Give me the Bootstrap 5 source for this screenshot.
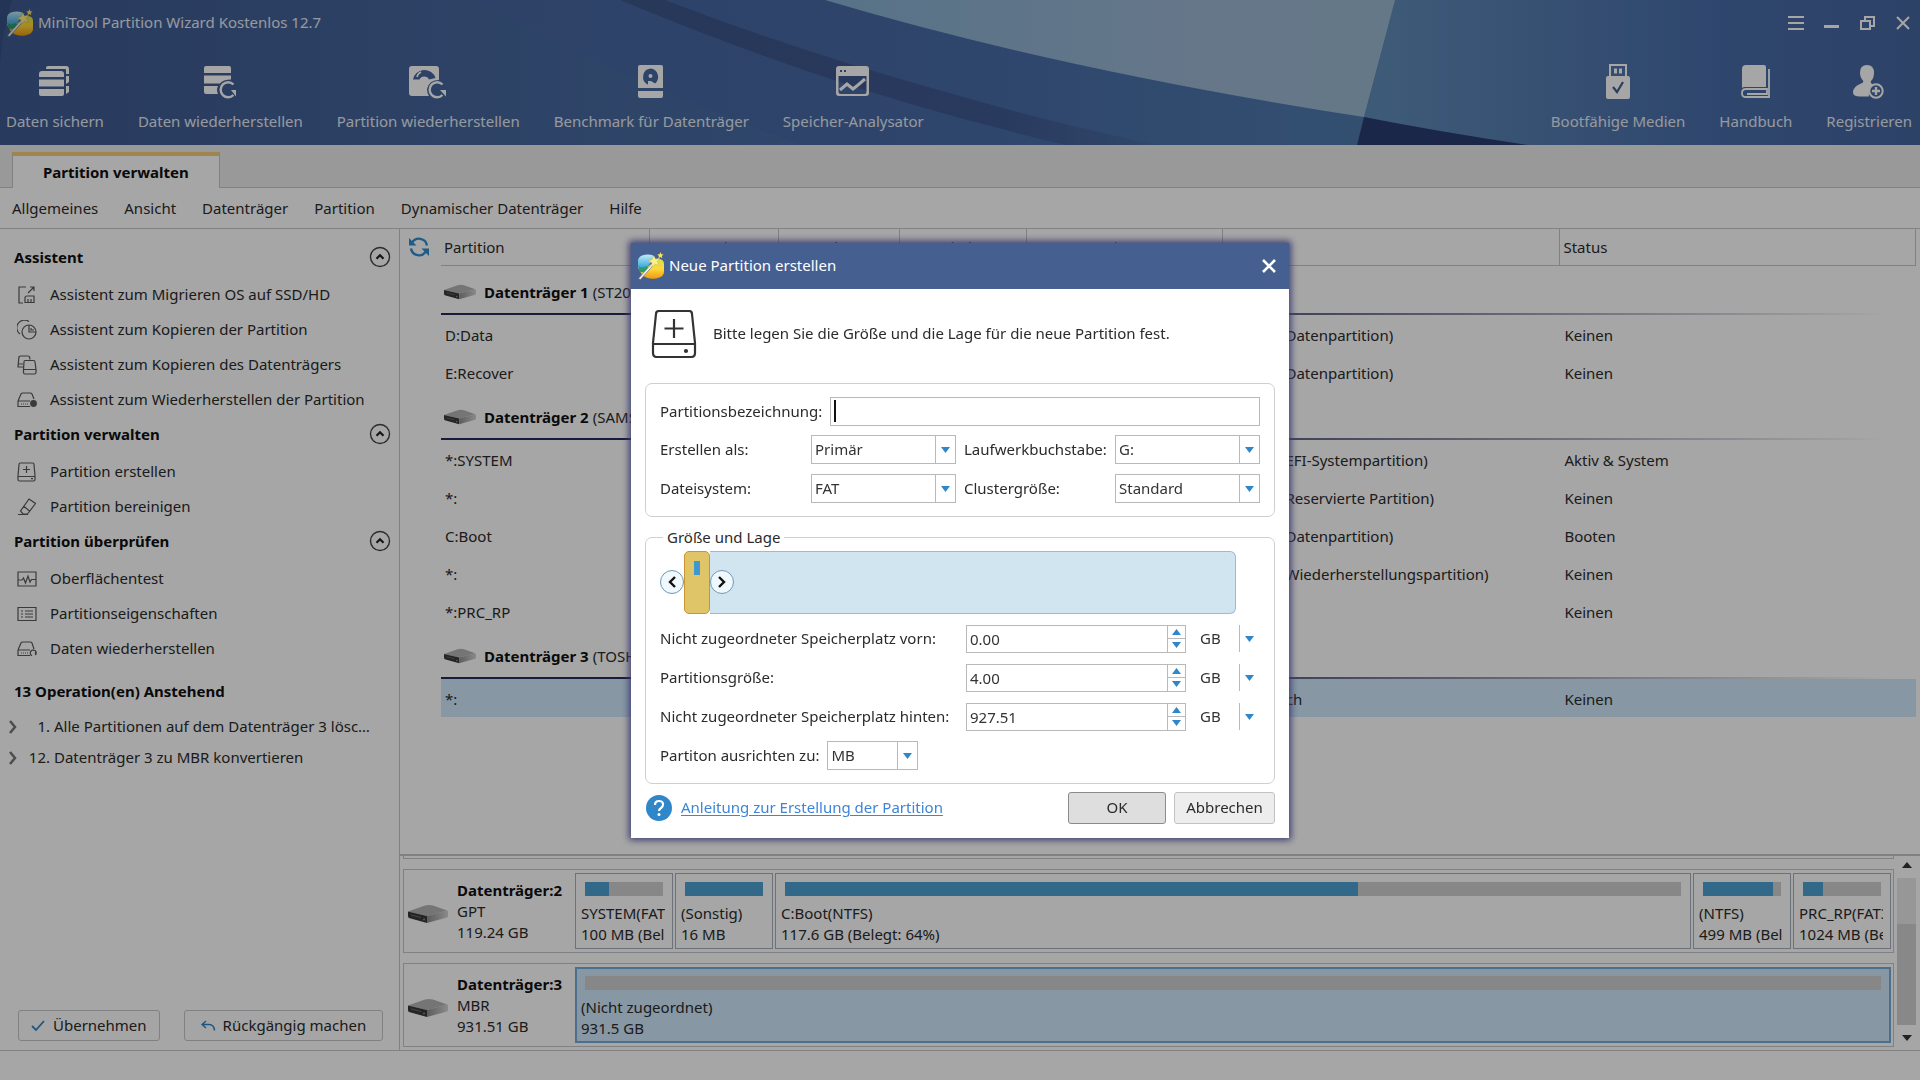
<!DOCTYPE html>
<html lang="de">
<head>
<meta charset="utf-8">
<meta name="viewport" content="width=device-width, initial-scale=1">
<title>MiniTool Partition Wizard Kostenlos 12.7</title>
<link href="https://cdn.jsdelivr.net/npm/bootstrap@5.3.0/dist/css/bootstrap.min.css" rel="stylesheet">
<style>
  :root { --line:#c4c6ca; --ink:#2b2b2b; --ink-strong:#101010; --accent:#2f86c9; --brand:#455f91; --used:#4da0d1; --pick:#cfe9fc; }
  body { font-family:"Noto Sans","Open Sans",sans-serif; font-size:15px; line-height:21px; color:var(--ink); background:#fff; overflow:hidden; }
  button, input, select { font:inherit; color:inherit; }
  b, .strong-text { font-weight:700; color:var(--ink-strong); }
  a { color:inherit; text-decoration:none; }
  svg { flex:none; display:block; }

  /* header */
  .app-head { background:var(--brand); color:#e6ebf4; height:145px; position:relative; overflow:hidden; }
  .head-art { position:absolute; inset:0; width:100%; height:100%; }
  .head-body { position:relative; }
  .title-row { height:45px; padding:0 8px 0 6px; }
  .win-set { gap:20px; }
  .win-btn { border:0; background:none; padding:0; width:16px; height:16px; color:#fff; }
  .tool-row { padding:19px 8px 0 6px; }
  .tool-set { gap:34px; }
  .tool { border:0; background:none; padding:0; gap:11px; color:inherit; }
  .tool svg { color:#fff; }

  /* tabs and menu */
  .tab-strip { height:43px; background:#ebebeb; border-bottom:1px solid var(--line); padding:7px 12px 0; }
  .tab-on { border:1px solid var(--line); border-top:4px solid #f7cd7d; border-bottom:0; background:#fff; padding:0 30px; margin-bottom:-1px; }
  .menu-row { height:41px; border-bottom:1px solid var(--line); padding:0 12px; gap:26px; }

  /* sidebar */
  .side { width:400px; border-right:1px solid var(--line); padding:11px 8px 9px 14px; }
  .side-head { height:37px; padding-bottom:3px; }
  .fold { border:0; background:none; padding:0; }
  .side-item { height:35px; gap:13px; padding-left:3px; }
  .side-item svg { color:#5a5a5a; }
  .task { height:31px; gap:10px; margin:0 12px 0 -5px; }
  .task-no { width:23px; text-align:right; }
  .task-body { gap:4px; min-width:0; }
  .side-actions { gap:24px; padding-left:4px; }
  .side-btn { height:31px; border:1px solid var(--line); border-radius:3px; background:#fdfdfd; gap:7px; padding:0 12px; }

  /* partition table */
  .grid-area { padding-left:41px; position:relative; }
  .reload { position:absolute; left:8px; top:7px; border:0; background:none; padding:0; }
  .parts { width:100%; table-layout:fixed; border-collapse:separate; border-spacing:0; }
  .parts th { height:37px; font-weight:400; border-bottom:1px solid var(--line); border-right:1px solid var(--line); padding:0 3px; text-align:center; }
  .parts th.to-left { text-align:left; }
  .parts .disk-row td { height:49px; padding:5px 3px 0; white-space:nowrap; border-bottom:2px solid; border-image:linear-gradient(90deg,#262a5c 0 35%,#6b6e90 60%,#fff 98%) 1; }
  .parts .part-row td { height:38px; padding:2px 4px 0; white-space:nowrap; }
  .parts .part-row.picked td { background:var(--pick); }
  .kind-box { width:14px; height:14px; background:#8ac4e8; border:1px solid #5a97c0; }

  /* disk map */
  .map { border-top:2px solid var(--line); height:196px; padding:0 0 3px 3px; }
  .disk-sliver { height:3px; border:1px solid var(--line); border-top:0; }
  .disk-card { height:84px; border:1px solid var(--line); padding:3px 2px 3px 3px; margin-top:10px; }
  .disk-info { width:168px; gap:8px; }
  .disk-info svg { margin-top:6px; }
  .vol-row { gap:2px; }
  .vol { border:1px solid #a7afbd; padding:8px 9px 4px; overflow:hidden; white-space:nowrap; }
  .vol-sm { width:98px; }
  .vol.picked { background:var(--pick); border:2px solid #75abda; padding:7px 8px 3px; }
  .vol-bar { height:14px; background:#d0d0d0; margin-bottom:7px; }
  .vol-fill { height:100%; background:var(--used); }
  .vol-text { margin:0 -2px 0 -4px; overflow:hidden; }
  .scroller { width:19px; margin:0 4px 0 3px; }
  .scroller button { border:0; background:none; padding:0; height:18px; }
  .scroll-track { background:#e8e8e8; height:150px; padding-top:46px; margin:4px 0; }
  .scroll-thumb { background:#d2d2d2; height:100%; }
  .foot { height:30px; border-top:1px solid var(--line); }

  /* dialog */
  .veil { position:fixed; inset:0; background:rgba(0,0,0,.35); }
  .stage { position:fixed; inset:0; }
  .dlg { width:658px; background:#fff; box-shadow:0 0 7px 2px #3c3c70; }
  .dlg-title { height:46px; background:var(--brand); color:#fff; padding:0 8px 0 6px; }
  .dlg-lead { padding:21px 20px 25px; gap:16px; }
  .dlg-body { padding:0 14px; }
  .panel { border:1px solid #cfcfcf; border-radius:7px; padding:13px 14px; }
  .panel-lower { margin-top:20px; position:relative; }
  .panel-name { position:absolute; left:17px; top:-11px; background:#fff; padding:0 4px; }
  .field { height:29px; border:1px solid #b9b9b9; border-radius:0; background-color:#fff; padding:0 3px; min-width:0; color:#333; }
  .field:focus { outline:0; }
  .field-active { caret-color:transparent; background-image:linear-gradient(#111,#111); background-repeat:no-repeat; background-size:2px 22px; background-position:3px center; }
  .pick { appearance:none; background-image:url("data:image/svg+xml,%3Csvg xmlns='http://www.w3.org/2000/svg' width='20' height='27'%3E%3Cpath d='M.5 0v27' stroke='%23b9b9b9'/%3E%3Cpath d='M6 11h9l-4.5 6z' fill='%232f86c9'/%3E%3C/svg%3E"); background-repeat:no-repeat; background-position:right center; }
  .pick-bare { border-color:transparent; margin-left:10px; }
  .pick-align { width:91px; }
  .form-grid { display:grid; grid-template-columns:151px 145px 159px 1fr; row-gap:10px; margin-top:9px; }
  .form-grid .pair-label { padding-left:8px; }
  .size-grid { display:grid; grid-template-columns:306px 220px 1fr; row-gap:11px; }
  .size-grid .field { height:28px; }
  .spin-keys { width:21px; border:1px solid #b9b9b9; border-left:0; }
  .spin-keys button { border:0; background:#fff; padding:0; flex:1; }
  .spin-keys button + button { border-top:1px solid #b9b9b9; }
  .lay { height:63px; margin:0 0 11px; }
  .lay-used { width:26px; background:#dfc468; border:1px solid #c9952f; border-radius:5px; padding-top:9px; }
  .lay-mark { width:6px; height:14px; background:#3d98cf; }
  .lay-free { flex:1; background:#d1e5f1; border:1px solid #a3b5da; border-left:0; border-radius:0 6px 6px 0; margin-right:24px; }
  .lay-key { width:24px; height:24px; border:1px solid #6f97b3; border-radius:50%; background:#eef8fd; padding:0; color:#111; z-index:1; }
  .lay-key.after { margin-right:-24px; }
  .align-row { padding-top:10px; }
  .dlg-foot { padding:8px 0 14px; }
  .dlg-btn { height:32px; border:1px solid #c2c2c2; border-radius:3px; background:#ededed; padding:0; width:101px; }
  .dlg-btn.main { border-color:#8b8b8b; background:#dedede; width:98px; }
  .help-link { color:#3d85d8; text-decoration:underline; text-underline-offset:2px; }
</style>
<script src="https://cdn.jsdelivr.net/npm/bootstrap@5.3.0/dist/js/bootstrap.bundle.min.js"></script>
</head>
<body class="d-flex flex-column vh-100">

<svg width="0" height="0" class="position-absolute" aria-hidden="true">
  <defs>
    <linearGradient id="gYel" x1="0" y1="0" x2="0" y2="1"><stop offset="0" stop-color="#d9e04a"/><stop offset=".5" stop-color="#ffd83a"/><stop offset="1" stop-color="#ec9a10"/></linearGradient>
    <linearGradient id="gCy" x1="0" y1="0" x2="0" y2="1"><stop offset="0" stop-color="#bfeaf8"/><stop offset="1" stop-color="#1c9ad6"/></linearGradient>
    <linearGradient id="gDisk" x1="0" y1="0" x2="1" y2="0"><stop offset="0" stop-color="#8f8f8f"/><stop offset="1" stop-color="#d4d4d4"/></linearGradient>
    <symbol id="logo" viewBox="0 0 28 28">
      <path d="M1 9q0-4 4-5.500Q10 2 15 3l3 2-7 9-8 4q-2-1-2-3z" fill="url(#gCy)"/>
      <path d="M1 15q5 3 9 0L21 7q6 0 6 5v8q0 5-8 6.500-9 1-14-3.500z" fill="url(#gYel)"/>
      <path d="M1.500 14q4 3 8 0l2 2q-4 6-9 3.500z" fill="#2f9a6a"/>
      <path d="M1.500 26.500L16 10l1.800 1.600L3.500 27.500z" fill="#eef0f2" stroke="#6d7a80" stroke-width=".7"/>
      <path d="M16.500 3.500l2.200 3.600 4-1-2.500 3.600 2.300 3.800-4.300-1.200-3 3-.2-4.400-3.800-2 4-1.400z" fill="#ffef8c" stroke="#b9a93a" stroke-width=".4"/>
      <path d="M23.500 0l.8 2.200 2.300.2-1.800 1.500.5 2.300-1.900-1.200-2 1.200.6-2.300L20.200 2.400l2.400-.2z" fill="#ffe45a"/>
    </symbol>
    <symbol id="disk" viewBox="0 0 40 20">
      <path d="M0 7.500L17 1.500q4-1 8 0L39 6.500 19 12z" fill="#b4b4b4"/>
      <path d="M0 7.500L19 12v7L1 14q-1-.5-1-2z" fill="#3a3a3a"/>
      <path d="M19 12L39 6.500q1 0 1 1V12q0 1-1 1.500L19 19z" fill="url(#gDisk)"/>
      <path d="M3 11l10 2.500" stroke="#6a6a6a" stroke-width="1"/><circle cx="16" cy="15.500" r=".9" fill="#5ec06a"/>
    </symbol>
    <symbol id="i-fold" viewBox="0 0 22 22"><circle cx="11" cy="11" r="9.500" fill="none" stroke="#444" stroke-width="1.400"/><path d="M7.500 12.700L11 9.200l3.500 3.500" fill="none" stroke="#222" stroke-width="2.200"/></symbol>
    <symbol id="i-save" viewBox="0 0 34 36" fill="currentColor"><path d="M8 4q0-2 2-2h18q3 0 3 3v5h-3V6q0-1-1-1H8zM28 12h3v6l-3 2zM28 22h3v6l-3 2z"/><path d="M1 13V10q0-3 3-3h19q3 0 3 3v3zM1 15.500h25v7H1zM1 25h25v5q0 2-2 2H3q-2 0-2-2z"/></symbol>
    <symbol id="i-rest" viewBox="0 0 34 36" fill="currentColor"><path d="M1 9V4q0-2 2-2h23q2 0 2 2v5zM1 11.500h27v4q-8 0-11 4H1zM1 22h14q-2 4 0 8H3q-2 0-2-2z"/><path d="M30.500 20.500a7.500 7.500 0 1 0 0 10.500" fill="none" stroke="currentColor" stroke-width="2.400"/><path d="M28 26h5v6.500z"/></symbol>
    <symbol id="i-prest" viewBox="0 0 38 36"><path fill="currentColor" fill-rule="evenodd" d="M3 2h24q3 0 3 3v11q-10 0-12 9 0 4 2 7H3q-3 0-3-3V5q0-3 3-3zM4 15.500a11.500 11 0 0 1 22.500-1.500L20 15.500a5 4.500 0 0 0-9.500 0z"/><circle cx="15.300" cy="15.500" r="1.600" fill="currentColor"/><path d="M8 13a8 7 0 0 1 4-5" fill="none" stroke="currentColor" stroke-width="1.600"/><path d="M33.500 20.500a7.500 7.500 0 1 0 0 10.500" fill="none" stroke="currentColor" stroke-width="2.400"/><path d="M31 26h6v6.500z" fill="currentColor"/></symbol>
    <symbol id="i-bench" viewBox="0 0 28 36"><path fill="currentColor" fill-rule="evenodd" d="M3 1h21q2 0 2 2v21H1V3q0-2 2-2zM13.500 4.500a8 8.500 0 0 0-2.500 16.300V17h3l4 2.500A8.500 8.500 0 0 0 13.500 4.500z"/><circle cx="13.500" cy="12" r="2" fill="currentColor"/><path fill="currentColor" d="M1 27h25v5q0 2-2 2H3q-2 0-2-2z"/></symbol>
    <symbol id="i-space" viewBox="0 0 34 36"><path fill="currentColor" fill-rule="evenodd" d="M3 2h27q3 0 3 3v24q0 3-3 3H3q-3 0-3-3V5q0-3 3-3zM2.500 12v16q0 2 2 2h24q2 0 2-2V12z"/><path d="M4 7h2M8 7h2" stroke="#455f91" stroke-width="2"/><path d="M4 26l7-6 6 5 5-4 7-6" fill="none" stroke="currentColor" stroke-width="3"/></symbol>
    <symbol id="i-usb" viewBox="0 0 24 36"><path fill="currentColor" fill-rule="evenodd" d="M3 0h18v12h1q2 0 2 2v19q0 2-2 2H2q-2 0-2-2V14q0-2 2-2h1zM5 2v10h14V2z"/><path d="M8 4.500h3v5H8zM13 4.500h3v5h-3z" fill="currentColor"/><path d="M7 23l4 5 6-10" fill="none" stroke="#455f91" stroke-width="2.200"/></symbol>
    <symbol id="i-book" viewBox="0 0 30 36"><path fill="currentColor" fill-rule="evenodd" d="M5 1h18q2 0 2 2v20H4q-2 0-3 1V5q0-4 4-4z"/><path d="M28 5v28H4q-3 0-3-4 0-4 4-4h21v5H6" fill="none" stroke="currentColor" stroke-width="1.800"/></symbol>
    <symbol id="i-reg" viewBox="0 0 32 36"><path fill="currentColor" d="M14 1q7 0 7 8 0 5-3 8-1 2 2 3.500-5 4-4 12H7q-7 0-7-4 0-6 8-9 3-1 2-3-3-3-3-8 0-7.500 7-7.500z"/><circle cx="23" cy="27" r="6.700" fill="none" stroke="currentColor" stroke-width="2"/><path d="M19 27h8M23 23v8" stroke="currentColor" stroke-width="2.400"/></symbol>

    <symbol id="s-migrate" viewBox="0 0 20 20" fill="none" stroke="currentColor" stroke-width="1.200"><path d="M9 2H2v16h4M11 8l6-6M13 2h4v4M8 17.500V13q0-2 2-2h7v6.500zM11 14v3M14 14v3"/></symbol>
    <symbol id="s-pcopy" viewBox="0 0 20 20" fill="none" stroke="currentColor" stroke-width="1.200"><circle cx="12" cy="12" r="7"/><path d="M12 5v7h7M3 14a7.500 7.500 0 0 1 9-12.500M14 8v2h3"/></symbol>
    <symbol id="s-dcopy" viewBox="0 0 20 20" fill="none" stroke="currentColor" stroke-width="1.200"><path d="M6 12H1L1.800 3q0-2 2-2h7q2 0 2 2v1.500M1.500 9H6M8 5.500h8.500q1.500 0 1.500 1.500l1 7.500v3q0 1.500-1.500 1.500H8q-1.500 0-1.500-1.500v-3l.5-7.500q0-1.500 1-1.500zM6.500 14.500H19"/></symbol>
    <symbol id="s-drest" viewBox="0 0 20 20" fill="none" stroke="currentColor" stroke-width="1.200"><path d="M1 11l3-7q.5-1 2-1h7q1.500 0 2 1l2 5M1 11h12M1 11v5.500h12M4 14h1M6 14h1M8 14h1M10 14h1"/><circle cx="16.500" cy="13.500" r="2.800" fill="currentColor"/></symbol>
    <symbol id="s-create" viewBox="0 0 20 20" fill="none" stroke="currentColor" stroke-width="1.200"><path d="M2 2.500q0-1.500 1.500-1.500h12q1.500 0 1.500 1.500l1 11.500v3.500q0 1.500-1.500 1.500h-14Q1 19 1 17.500V14zM1 14.500h17M9.500 4v7M6 7.500h7M14 16.700h2"/></symbol>
    <symbol id="s-clean" viewBox="0 0 20 20" fill="none" stroke="currentColor" stroke-width="1.200"><path d="M12 2l6.500 4.500-8 10.500H6l-2.500-3zM6.500 9l6 5M1 17.500h10"/></symbol>
    <symbol id="s-surface" viewBox="0 0 20 20" fill="none" stroke="currentColor" stroke-width="1.200"><path d="M1 3h18v14H1zM1 11h4l1.500-2 2 5L11 7l2 6 1.500-2.500H19"/></symbol>
    <symbol id="s-props" viewBox="0 0 20 20" fill="none" stroke="currentColor" stroke-width="1.200"><path d="M1 3.500h18v13H1zM4 7h2M4 10h2M4 13h2M8 7h8M8 10h8M8 13h8"/></symbol>
    <symbol id="s-data" viewBox="0 0 20 20" fill="none" stroke="currentColor" stroke-width="1.200"><path d="M1 11l3-7q.5-1 2-1h7q1.500 0 2 1l2 6M1 11h12M1 11v5.500h12M4 14h1M6 14h1M8 14h1M10 14h1M18.500 16a3 3 0 1 0-3.500.8M18.500 13v3"/></symbol>
  </defs>
</svg>

<header class="app-head flex-shrink-0">
  <svg class="head-art" viewBox="0 0 1920 145" preserveAspectRatio="none" aria-hidden="true">
    <defs>
      <linearGradient id="hBase"><stop offset="0" stop-color="#3e5a90"/><stop offset=".3" stop-color="#47699f"/><stop offset=".5" stop-color="#4b70a8"/><stop offset=".72" stop-color="#5f8bb8"/><stop offset=".9" stop-color="#486ba8"/><stop offset="1" stop-color="#46669f"/></linearGradient>
      <linearGradient id="hLight"><stop offset="0" stop-color="#86b0d2"/><stop offset=".6" stop-color="#9bb6d4"/><stop offset="1" stop-color="#9bb9d2"/></linearGradient>
      <linearGradient id="hMid"><stop offset="0" stop-color="#47669f"/><stop offset=".5" stop-color="#486aa6"/><stop offset="1" stop-color="#4f7cae"/></linearGradient>
      <linearGradient id="hBand"><stop offset="0" stop-color="#3d5689"/><stop offset=".7" stop-color="#3f5992"/><stop offset="1" stop-color="#4a6fa3"/></linearGradient>
    </defs>
    <rect width="1920" height="145" fill="url(#hBase)"/>
    <path d="M0 0h12Q3 30 0 62z" fill="#385086"/>
    <path d="M477 0Q620 78 800 145H1357L1395 0z" fill="url(#hMid)"/>
    <path d="M620 0Q800 75 960 118 1020 134 1065 145H1158Q1060 125 960 96 800 52 665 0z" fill="url(#hBand)"/>
    <path d="M825 0Q1060 70 1364 117L1395 0z" fill="url(#hLight)"/>
    <path d="M1364 117L1357 145H1528Q1440 132 1364 117z" fill="#2a3c6f"/>
  </svg>
  <div class="head-body">
    <div class="title-row d-flex align-items-center justify-content-between">
      <div class="d-flex align-items-center gap-1"><svg width="28" height="28"><use href="#logo"/></svg><span>MiniTool Partition Wizard Kostenlos 12.7</span></div>
      <div class="win-set d-flex">
        <button class="win-btn" aria-label="Menü"><svg width="16" height="16" stroke="currentColor" stroke-width="2"><path d="M0 2h16M0 8h16M0 14h16"/></svg></button>
        <button class="win-btn" aria-label="Minimieren"><svg width="16" height="16" stroke="currentColor" stroke-width="3"><path d="M0 11.500h15"/></svg></button>
        <button class="win-btn" aria-label="Wiederherstellen"><svg width="16" height="16" fill="none" stroke="currentColor" stroke-width="2"><path d="M1 6h9v8H1zM5 5V2h9v9h-3"/></svg></button>
        <button class="win-btn" aria-label="Schließen"><svg width="14" height="16" stroke="currentColor" stroke-width="2"><path d="M1 2l12 12M13 2L1 14"/></svg></button>
      </div>
    </div>
    <nav class="tool-row d-flex justify-content-between" aria-label="Werkzeuge">
      <div class="tool-set d-flex">
        <button class="tool d-flex flex-column align-items-center"><svg width="34" height="36"><use href="#i-save"/></svg>Daten sichern</button>
        <button class="tool d-flex flex-column align-items-center"><svg width="34" height="36"><use href="#i-rest"/></svg>Daten wiederherstellen</button>
        <button class="tool d-flex flex-column align-items-center"><svg width="38" height="36"><use href="#i-prest"/></svg>Partition wiederherstellen</button>
        <button class="tool d-flex flex-column align-items-center"><svg width="28" height="36"><use href="#i-bench"/></svg>Benchmark für Datenträger</button>
        <button class="tool d-flex flex-column align-items-center"><svg width="34" height="36"><use href="#i-space"/></svg>Speicher-Analysator</button>
      </div>
      <div class="tool-set d-flex">
        <button class="tool d-flex flex-column align-items-center"><svg width="24" height="36"><use href="#i-usb"/></svg>Bootfähige Medien</button>
        <button class="tool d-flex flex-column align-items-center"><svg width="30" height="36"><use href="#i-book"/></svg>Handbuch</button>
        <button class="tool d-flex flex-column align-items-center"><svg width="32" height="36"><use href="#i-reg"/></svg>Registrieren</button>
      </div>
    </nav>
  </div>
</header>

<div class="tab-strip d-flex flex-shrink-0"><button class="tab-on strong-text">Partition verwalten</button></div>
<nav class="menu-row d-flex align-items-center flex-shrink-0" aria-label="Menü">
  <a href="#">Allgemeines</a><a href="#">Ansicht</a><a href="#">Datenträger</a><a href="#">Partition</a><a href="#">Dynamischer Datenträger</a><a href="#">Hilfe</a>
</nav>

<div class="d-flex flex-grow-1 overflow-hidden">
  <aside class="side d-flex flex-column flex-shrink-0">
    <div class="side-head d-flex align-items-center justify-content-between"><b>Assistent</b><button class="fold" aria-label="Einklappen"><svg width="22" height="22"><use href="#i-fold"/></svg></button></div>
    <a href="#" class="side-item d-flex align-items-center"><svg width="20" height="20"><use href="#s-migrate"/></svg>Assistent zum Migrieren OS auf SSD/HD</a>
    <a href="#" class="side-item d-flex align-items-center"><svg width="20" height="20"><use href="#s-pcopy"/></svg>Assistent zum Kopieren der Partition</a>
    <a href="#" class="side-item d-flex align-items-center"><svg width="20" height="20"><use href="#s-dcopy"/></svg>Assistent zum Kopieren des Datenträgers</a>
    <a href="#" class="side-item d-flex align-items-center"><svg width="20" height="20"><use href="#s-drest"/></svg>Assistent zum Wiederherstellen der Partition</a>
    <div class="side-head d-flex align-items-center justify-content-between"><b>Partition verwalten</b><button class="fold" aria-label="Einklappen"><svg width="22" height="22"><use href="#i-fold"/></svg></button></div>
    <a href="#" class="side-item d-flex align-items-center"><svg width="20" height="20"><use href="#s-create"/></svg>Partition erstellen</a>
    <a href="#" class="side-item d-flex align-items-center"><svg width="20" height="20"><use href="#s-clean"/></svg>Partition bereinigen</a>
    <div class="side-head d-flex align-items-center justify-content-between"><b>Partition überprüfen</b><button class="fold" aria-label="Einklappen"><svg width="22" height="22"><use href="#i-fold"/></svg></button></div>
    <a href="#" class="side-item d-flex align-items-center"><svg width="20" height="20"><use href="#s-surface"/></svg>Oberflächentest</a>
    <a href="#" class="side-item d-flex align-items-center"><svg width="20" height="20"><use href="#s-props"/></svg>Partitionseigenschaften</a>
    <a href="#" class="side-item d-flex align-items-center"><svg width="20" height="20"><use href="#s-data"/></svg>Daten wiederherstellen</a>
    <div class="side-head d-flex align-items-center mt-2"><b>13 Operation(en) Anstehend</b></div>
    <div class="task d-flex align-items-center"><svg width="8" height="14" fill="none" stroke="#777" stroke-width="2.500"><path d="M1 1l5 6-5 6"/></svg><div class="task-body d-flex"><span class="task-no flex-shrink-0">1.</span><span class="text-truncate">Alle Partitionen auf dem Datenträger 3 löschen</span></div></div>
    <div class="task d-flex align-items-center"><svg width="8" height="14" fill="none" stroke="#777" stroke-width="2.500"><path d="M1 1l5 6-5 6"/></svg><div class="task-body d-flex"><span class="task-no flex-shrink-0">12.</span><span class="text-truncate">Datenträger 3 zu MBR konvertieren</span></div></div>
    <div class="side-actions d-flex mt-auto">
      <button class="side-btn d-flex align-items-center"><svg width="15" height="12" fill="none" stroke="#2f86c9" stroke-width="1.800"><path d="M1 6l4 4 8-9"/></svg>Übernehmen</button>
      <button class="side-btn d-flex align-items-center px-3"><svg width="15" height="12" fill="none" stroke="#2f86c9" stroke-width="1.500"><path d="M5 1L1 4.500 5 8M1 4.500h7q5 0 5.500 6"/></svg>Rückgängig machen</button>
    </div>
  </aside>

  <main class="d-flex flex-column flex-grow-1 overflow-hidden">
    <div class="grid-area flex-grow-1 overflow-hidden pe-1">
      <button class="reload" aria-label="Aktualisieren"><svg width="22" height="22" fill="none" stroke="#2f8fd0" stroke-width="2.400"><path d="M4 7a8 8 0 0 1 15 2.500M18 15a8 8 0 0 1-15-2.500"/><path d="M1 2v7.500h7.500zM21 20v-7.500h-7.500z" fill="#2f8fd0" stroke="none"/></svg></button>
      <table class="parts">
        <colgroup><col style="width:14.200%"><col style="width:8.700%"><col style="width:8.200%"><col style="width:8.600%"><col style="width:13.300%"><col style="width:22.900%"><col></colgroup>
        <thead><tr><th class="to-left">Partition</th><th>Kapazität</th><th>Belegt</th><th>Unbelegt</th><th>Dateisystem</th><th class="to-left">Typ</th><th class="to-left">Status</th></tr></thead>
        <tbody>
          <tr class="disk-row"><td colspan="7"><div class="d-flex align-items-center"><svg width="32" height="16" class="me-2"><use href="#disk"/></svg><b class="me-1">Datenträger 1</b><span>(ST2000DM)</span></div></td></tr>
          <tr class="part-row"><td colspan="5">D:Data</td><td><div class="d-flex align-items-center gap-2"><span class="kind-box"></span>GPT (Datenpartition)</div></td><td>Keinen</td></tr>
          <tr class="part-row"><td colspan="5">E:Recover</td><td><div class="d-flex align-items-center gap-2"><span class="kind-box"></span>GPT (Datenpartition)</div></td><td>Keinen</td></tr>
          <tr class="disk-row"><td colspan="7"><div class="d-flex align-items-center"><svg width="32" height="16" class="me-2"><use href="#disk"/></svg><b class="me-1">Datenträger 2</b><span>(SAMSUNG)</span></div></td></tr>
          <tr class="part-row"><td colspan="5">*:SYSTEM</td><td><div class="d-flex align-items-center gap-2"><span class="kind-box"></span>GPT (EFI-Systempartition)</div></td><td>Aktiv &amp; System</td></tr>
          <tr class="part-row"><td colspan="5">*:</td><td><div class="d-flex align-items-center gap-2"><span class="kind-box"></span>GPT (Reservierte Partition)</div></td><td>Keinen</td></tr>
          <tr class="part-row"><td colspan="5">C:Boot</td><td><div class="d-flex align-items-center gap-2"><span class="kind-box"></span>GPT (Datenpartition)</div></td><td>Booten</td></tr>
          <tr class="part-row"><td colspan="5">*:</td><td><div class="d-flex align-items-center gap-2"><span class="kind-box"></span>GPT (Wiederherstellungspartition)</div></td><td>Keinen</td></tr>
          <tr class="part-row"><td colspan="5">*:PRC_RP</td><td><div class="d-flex align-items-center gap-2"><span class="kind-box"></span>GPT</div></td><td>Keinen</td></tr>
          <tr class="disk-row"><td colspan="7"><div class="d-flex align-items-center"><svg width="32" height="16" class="me-2"><use href="#disk"/></svg><b class="me-1">Datenträger 3</b><span>(TOSHIBA)</span></div></td></tr>
          <tr class="part-row picked"><td colspan="5">*:</td><td><div class="d-flex align-items-center gap-2"><span class="kind-box"></span>Logisch</div></td><td>Keinen</td></tr>
        </tbody>
      </table>
    </div>

    <section class="map d-flex flex-shrink-0" aria-label="Datenträgerkarte">
      <div class="flex-grow-1 overflow-hidden">
        <div class="disk-sliver"></div>
        <div class="disk-card d-flex">
          <div class="disk-info d-flex align-items-center flex-shrink-0"><svg width="42" height="20"><use href="#disk"/></svg><div><b>Datenträger:2</b><br>GPT<br>119.24 GB</div></div>
          <div class="vol-row d-flex flex-grow-1 overflow-hidden">
            <div class="vol vol-sm flex-shrink-0"><div class="vol-bar"><div class="vol-fill" style="width:31%"></div></div><div class="vol-text">SYSTEM(FAT32)<br>100 MB (Belegt: 31%)</div></div>
            <div class="vol vol-sm flex-shrink-0"><div class="vol-bar"><div class="vol-fill" style="width:100%"></div></div><div class="vol-text">(Sonstig)<br>16 MB</div></div>
            <div class="vol flex-grow-1"><div class="vol-bar"><div class="vol-fill" style="width:64%"></div></div><div class="vol-text">C:Boot(NTFS)<br>117.6 GB (Belegt: 64%)</div></div>
            <div class="vol vol-sm flex-shrink-0"><div class="vol-bar"><div class="vol-fill" style="width:90%"></div></div><div class="vol-text">(NTFS)<br>499 MB (Belegt: 90%)</div></div>
            <div class="vol vol-sm flex-shrink-0"><div class="vol-bar"><div class="vol-fill" style="width:25%"></div></div><div class="vol-text">PRC_RP(FAT32)<br>1024 MB (Belegt: 25%)</div></div>
          </div>
        </div>
        <div class="disk-card d-flex">
          <div class="disk-info d-flex align-items-center flex-shrink-0"><svg width="42" height="20"><use href="#disk"/></svg><div><b>Datenträger:3</b><br>MBR<br>931.51 GB</div></div>
          <div class="vol picked flex-grow-1"><div class="vol-bar"></div><div class="vol-text">(Nicht zugeordnet)<br>931.5 GB</div></div>
        </div>
      </div>
      <div class="scroller d-flex flex-column flex-shrink-0">
        <button class="d-flex align-items-center justify-content-center" aria-label="Nach oben"><svg width="10" height="6"><path d="M0 6l5-6 5 6z" fill="#333"/></svg></button>
        <div class="scroll-track"><div class="scroll-thumb"></div></div>
        <button class="d-flex align-items-center justify-content-center" aria-label="Nach unten"><svg width="10" height="6"><path d="M0 0l5 6 5-6z" fill="#333"/></svg></button>
      </div>
    </section>
  </main>
</div>
<footer class="foot flex-shrink-0"></footer>

<div class="veil"></div>
<div class="stage d-flex align-items-center justify-content-center">
  <form class="dlg" role="dialog" aria-labelledby="dlgTitle" onsubmit="return false">
    <div class="dlg-title d-flex align-items-center justify-content-between">
      <div class="d-flex align-items-center gap-1"><svg width="28" height="28"><use href="#logo"/></svg><span id="dlgTitle">Neue Partition erstellen</span></div>
      <button type="button" class="win-btn me-1" aria-label="Schließen"><svg width="16" height="16" stroke="currentColor" stroke-width="2.600"><path d="M2 2l12 12M14 2L2 14"/></svg></button>
    </div>
    <div class="dlg-lead d-flex align-items-center">
      <svg width="46" height="48" fill="none" stroke="#333" stroke-width="2.200"><path d="M5 4q0-3 3-3h30q3 0 3 3l3 29v10q0 4-4 4H6q-4 0-4-4V33z"/><path d="M2 34h42M23 9v19M13.500 18.500h19"/><circle cx="35" cy="41" r="1" fill="#333"/></svg>
      <span>Bitte legen Sie die Größe und die Lage für die neue Partition fest.</span>
    </div>
    <div class="dlg-body">
      <div class="panel">
        <div class="d-flex align-items-center gap-2"><label for="pName">Partitionsbezeichnung:</label><input id="pName" class="field field-active flex-grow-1" type="text"></div>
        <div class="form-grid align-items-center">
          <label for="pKind">Erstellen als:</label><select id="pKind" class="field pick"><option>Primär</option></select>
          <label for="pLetter" class="pair-label">Laufwerkbuchstabe:</label><select id="pLetter" class="field pick"><option>G:</option></select>
          <label for="pFs">Dateisystem:</label><select id="pFs" class="field pick"><option>FAT</option></select>
          <label for="pCluster" class="pair-label">Clustergröße:</label><select id="pCluster" class="field pick"><option>Standard</option></select>
        </div>
      </div>
      <div class="panel panel-lower" role="group" aria-labelledby="grpName">
        <span class="panel-name" id="grpName">Größe und Lage</span>
        <div class="lay d-flex">
          <button type="button" class="lay-key align-self-center d-flex align-items-center justify-content-center" aria-label="Links verschieben"><svg width="8" height="12" fill="none" stroke="currentColor" stroke-width="2.400"><path d="M7 1L2 6l5 5"/></svg></button>
          <div class="lay-used d-flex justify-content-center"><div class="lay-mark"></div></div>
          <button type="button" class="lay-key after align-self-center d-flex align-items-center justify-content-center" aria-label="Rechts verschieben"><svg width="8" height="12" fill="none" stroke="currentColor" stroke-width="2.400"><path d="M1 1l5 5-5 5"/></svg></button>
          <div class="lay-free"></div>
        </div>
        <div class="size-grid align-items-center">
          <label for="sBefore">Nicht zugeordneter Speicherplatz vorn:</label>
          <div class="d-flex"><input id="sBefore" class="field flex-grow-1" value="0.00"><div class="spin-keys d-flex flex-column"><button type="button" class="d-flex align-items-center justify-content-center" aria-label="Mehr"><svg width="9" height="6"><path d="M0 6l4.500-6L9 6z" fill="#2f86c9"/></svg></button><button type="button" class="d-flex align-items-center justify-content-center" aria-label="Weniger"><svg width="9" height="6"><path d="M0 0l4.500 6L9 0z" fill="#2f86c9"/></svg></button></div></div>
          <select class="field pick pick-bare" aria-label="Einheit vorn"><option>GB</option></select>
          <label for="sSize">Partitionsgröße:</label>
          <div class="d-flex"><input id="sSize" class="field flex-grow-1" value="4.00"><div class="spin-keys d-flex flex-column"><button type="button" class="d-flex align-items-center justify-content-center" aria-label="Mehr"><svg width="9" height="6"><path d="M0 6l4.500-6L9 6z" fill="#2f86c9"/></svg></button><button type="button" class="d-flex align-items-center justify-content-center" aria-label="Weniger"><svg width="9" height="6"><path d="M0 0l4.500 6L9 0z" fill="#2f86c9"/></svg></button></div></div>
          <select class="field pick pick-bare" aria-label="Einheit Größe"><option>GB</option></select>
          <label for="sAfter">Nicht zugeordneter Speicherplatz hinten:</label>
          <div class="d-flex"><input id="sAfter" class="field flex-grow-1" value="927.51"><div class="spin-keys d-flex flex-column"><button type="button" class="d-flex align-items-center justify-content-center" aria-label="Mehr"><svg width="9" height="6"><path d="M0 6l4.500-6L9 6z" fill="#2f86c9"/></svg></button><button type="button" class="d-flex align-items-center justify-content-center" aria-label="Weniger"><svg width="9" height="6"><path d="M0 0l4.500 6L9 0z" fill="#2f86c9"/></svg></button></div></div>
          <select class="field pick pick-bare" aria-label="Einheit hinten"><option>GB</option></select>
        </div>
        <div class="align-row d-flex align-items-center gap-2"><label for="pAlign">Partiton ausrichten zu:</label><select id="pAlign" class="field pick pick-align"><option>MB</option></select></div>
      </div>
      <div class="dlg-foot d-flex align-items-center gap-2">
        <svg width="28" height="28"><circle cx="14" cy="14" r="13" fill="#2f86c9"/><path d="M10 11q0-4 4-4t4 3.500q0 2-2 3.500-2 1.300-2 3" fill="none" stroke="#fff" stroke-width="2.200"/><circle cx="14" cy="20.500" r="1.500" fill="#fff"/></svg>
        <a href="#" class="help-link me-auto">Anleitung zur Erstellung der Partition</a>
        <button type="submit" class="dlg-btn main">OK</button><button type="button" class="dlg-btn">Abbrechen</button>
      </div>
    </div>
  </form>
</div>
</body>
</html>
